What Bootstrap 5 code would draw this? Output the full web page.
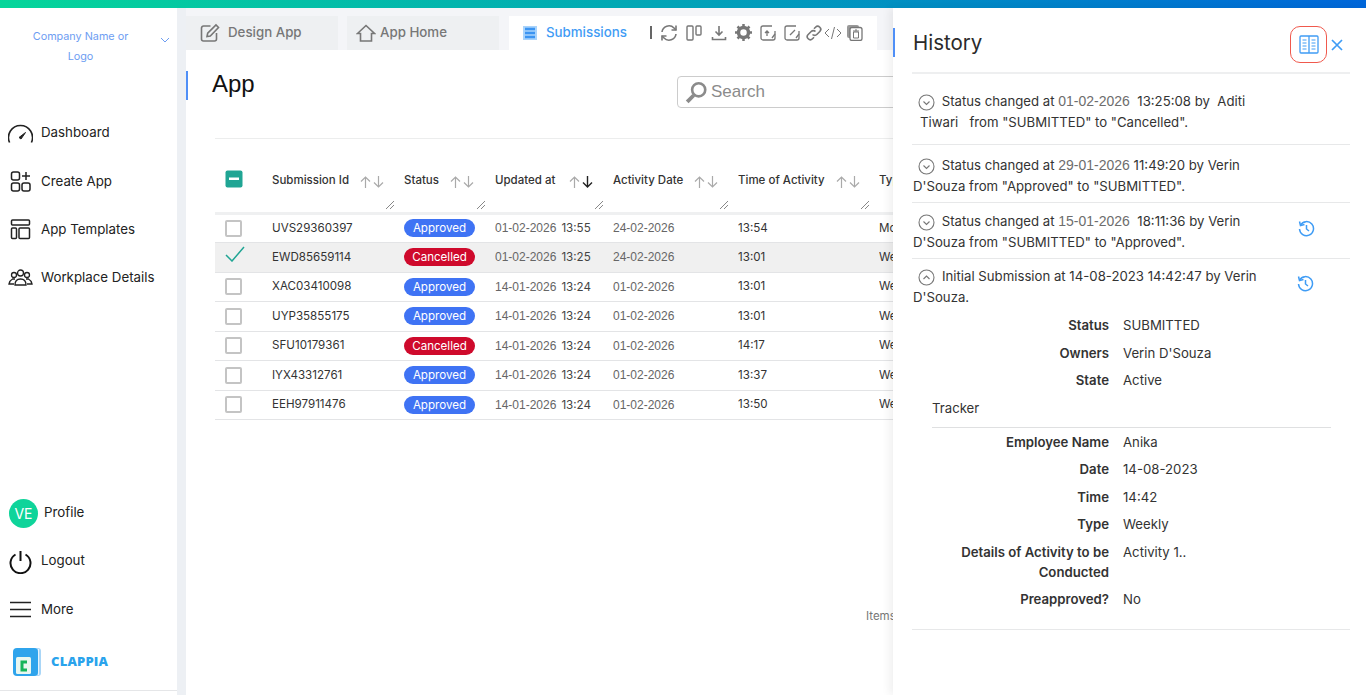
<!DOCTYPE html>
<html lang="en">
<head>
<meta charset="utf-8">
<title>App</title>
<link href="https://cdn.jsdelivr.net/npm/bootstrap@5.3.0/dist/css/bootstrap.min.css" rel="stylesheet">
<style>
html,body{height:695px;overflow:hidden}
body{font-family:Inter,"Liberation Sans",sans-serif;font-size:13px;color:#222;background:#fff}
.topgrad{height:8px;background:linear-gradient(90deg,#05d69a 0%,#01a9b4 45%,#0066d9 100%)}
.shell{height:687px}
.sidebar{width:177px;flex:none;background:#fff;padding-bottom:4px}
.brandbox{height:101px;padding-top:19px;position:relative;color:#6d9df2;font-size:10.8px;line-height:20px;text-align:center;width:161px;flex:none}
.brandchev{position:absolute;left:160px;top:29px}
.navlink{display:flex;align-items:center;height:48.4px;padding-left:8px;gap:8px;color:#222;font-size:13.3px;text-decoration:none;white-space:nowrap}
.navico{width:25px;height:25px;flex:none}
.avatarve{width:29px;height:29px;flex:none;border-radius:50%;background:#0fd49a;color:#fff;font-size:14px;margin-left:1px;margin-right:-2px}
.logoword{color:#2aa3ec;font-family:"Open Sans",sans-serif;font-weight:800;font-size:13px;letter-spacing:.2px}
.logorow{margin-top:9px;padding-left:12px;gap:9px;height:38px;display:flex;align-items:center}
.baseline{height:1px;background:#e5e6e8;margin-top:9px}
.gutter{width:9px;flex:none;background:#edf0f4}
.mainpane{flex:1 1 0;min-width:0;overflow:hidden;background:#fff}
.tabstrip{height:42px;background:#f4f5f8;padding-top:8px;gap:9px}
.tabgray{width:152px;height:34px;background:#eef0f2;color:#777;font-size:13.3px;font-weight:500;gap:8px;padding-bottom:1px}
.tabfirst{padding-left:14px}
.tabsecond{padding-left:9px;gap:4px;margin-right:1px}
.tabactive{width:368px;height:34px;background:#fff;padding-left:14px;padding-bottom:1px;flex:none}
.subname{color:#3f9cf5;font-size:13.3px;font-weight:500;margin-left:9px;margin-right:22px;width:82px;white-space:nowrap}
.tooldiv{width:2px;height:13px;background:#666;margin-right:8px}
.toolset{color:#777}
.gapa{margin-left:8px}.gapb{margin-left:9px}.gapc{margin-left:6px}.gapd{margin-left:2px}.gape{margin-left:4px}
.titlerow{height:89px;border-bottom:1px solid #eceded;margin-left:29px;position:relative;padding-top:20px}
.bluemark{position:absolute;left:-29px;top:21px;width:2px;height:29px;background:#4f8ff7}
.apptitle{font-family:"Liberation Sans",sans-serif;font-size:24px;color:#111;margin:0 0 0 -3px;font-weight:400;line-height:28px}
.searchbox{position:absolute;left:462px;top:26px;width:260px;height:32px;border:1px solid #ccc;border-radius:4px;color:#8b8b8b;font-family:"Liberation Sans",sans-serif;font-size:17px;padding-left:7px;gap:3px}
.tablewrap{margin:18px 0 0 29px;width:750px;overflow:hidden}
.gridtable{table-layout:fixed;width:750px;border-collapse:collapse;margin:0}
.colc0{width:57px}.colc1{width:132px}.colc2{width:91px}.colc3{width:118px}.colc4{width:125px}.colc5{width:141px}.colc6{width:86px}
.gridtable th{height:56px;border-bottom:3px solid #eff0f1;font-weight:500;font-size:11.5px;color:#333;vertical-align:top;padding:15px 0 0;position:relative;white-space:nowrap}
.gridtable td{height:29.5px;border-bottom:1px solid #e3e4e6;font-size:11.6px;color:#333;padding:0;vertical-align:middle;white-space:nowrap;overflow:hidden}
.rowsel td{background:#f0f0f0}
.datecell{color:#666;font-family:"Liberation Sans",sans-serif;font-size:12px}
.gridtable td.datecell{color:#666;font-family:"Liberation Sans",sans-serif;font-size:12px}
.timecell{color:#444;margin-left:5px}
.sorters{display:inline-flex;margin-left:11px;gap:2px;vertical-align:-4px}
.sorterswide{margin-left:14px}
.gripmark{position:absolute;right:10px;bottom:3px}
.statuspill{display:inline-block;width:71px;height:18px;line-height:18px;border-radius:9px;text-align:center;font-size:11.6px;color:#fff;background:#3f73f4}
.pillred{background:#cf0a2c}
.boxmark{display:block;width:17px;height:17px;border:2px solid #c4c4c4;border-radius:2px;margin-left:10px}
.headbox{display:block;margin:-2px 0 0 10px}
.rowcheck{display:block;margin:-6px 0 0 10px}
.footitems{position:absolute;left:866px;top:600px;color:#777;font-size:11.5px}
.historypane{width:473px;flex:none;background:#fff;box-shadow:-4px 0 8px rgba(0,0,0,.06);position:relative;z-index:3;padding:0 16px 0 20px;font-size:13.2px;color:#333}
.panebar{position:absolute;left:0;top:20px;width:2px;height:29px;background:#4f8ff7}
.panehead{height:66px;border-bottom:2px solid #eeeff0;padding:22px 0 0 1px;position:relative;margin-left:-1px}
.panetitle{font-size:20.5px;font-weight:400;color:#2b2b2b;margin:0;line-height:26px}
.readbtn{position:absolute;left:378px;top:18px;width:37px;height:37px;border:1px solid #f0594d;border-radius:10px}
.closemark{position:absolute;left:419px;top:31px}
.histitem{border-bottom:1px solid #e7e8e9;position:relative;line-height:21px;white-space:nowrap;margin-left:-1px;padding-left:1px}
.histfirst{height:71px;padding-top:17px}
.histsecond{height:58px;padding-top:10px}
.histthird{height:56px;padding-top:8px}
.histfourth{padding-top:7px;height:371px}
.circlechev{display:inline-block;vertical-align:-5px;margin:0 3px 0 5px}
.circlechevup{margin-right:7px}
.tiwarimark{margin-left:7px}
.restoremark{position:absolute;left:386px;top:17px}
.restorelow{left:385px;top:16px}
.mutedate{color:#6d6d6d;font-family:"Liberation Sans",sans-serif;font-size:14px}
.detailrow{display:flex;gap:14px;line-height:20px;margin-bottom:7.5px}
.detailkey{width:196px;text-align:right;font-weight:600;flex:none;color:#333;padding-left:45px;white-space:normal}
.trackerhead{margin-left:19px;border-bottom:1px solid #dfe0e1;width:399px;height:30px;line-height:20px;margin-bottom:4px}
.detailstack{padding-top:7px}
</style>
</head>
<body>
<div class="topgrad"></div>
<div class="d-flex shell position-relative">
  <aside class="sidebar d-flex flex-column">
    <div class="brandbox">Company Name or<br>Logo
      <svg class="brandchev" width="10" height="6" viewBox="0 0 10 6" fill="none" stroke="#6d9df2"><path d="M1 1l4 4 4-4"/></svg>
    </div>
    <a class="navlink" href="#"><svg class="navico" viewBox="0 0 25 25" fill="none" stroke="#222" stroke-width="1.600"><path d="M1.600 21.500A12 12 0 1 1 23.400 21.500"/><path d="M11 16.500L17.500 11.500 13 18z" fill="#222" stroke-width="1"/></svg>Dashboard</a>
    <a class="navlink" href="#"><svg class="navico" viewBox="0 0 25 25" fill="none" stroke="#222" stroke-width="1.500"><rect x="3.500" y="3" width="8" height="8" rx="2"/><rect x="3.500" y="14" width="8" height="8" rx="2"/><rect x="14" y="14" width="8" height="8" rx="2"/><path d="M18 3v8M14 7h8"/></svg>Create App</a>
    <a class="navlink" href="#"><svg class="navico" viewBox="0 0 25 25" fill="none" stroke="#222" stroke-width="1.500"><rect x="3.500" y="3" width="18" height="5" rx="1"/><rect x="3.500" y="11" width="5" height="10.500" rx="1"/><rect x="11" y="11" width="10.500" height="10.500" rx="1"/></svg>App Templates</a>
    <a class="navlink" href="#"><svg class="navico" viewBox="0 0 25 25" fill="none" stroke="#222" stroke-width="1.300"><circle cx="12.500" cy="7" r="3"/><circle cx="6" cy="9" r="2.500"/><circle cx="19" cy="9" r="2.500"/><path d="M7 19c0-4 2-6 5.500-6s5.500 2 5.500 6z"/><path d="M7 13H4.500C2.500 14 1.500 15.500 1 18h5"/><path d="M18 13h2.500c2 1 3 2.500 3.500 5h-5"/></svg>Workplace Details</a>
    <div class="flex-grow-1"></div>
    <a class="navlink" href="#"><span class="avatarve d-flex align-items-center justify-content-center">VE</span><span>Profile</span></a>
    <a class="navlink" href="#"><svg class="navico" viewBox="0 0 25 25" fill="none" stroke="#111" stroke-width="2"><path d="M7.500 5.500a10 10 0 1 0 10 0"/><path d="M12.500 2v10"/></svg>Logout</a>
    <a class="navlink" href="#"><svg class="navico" viewBox="0 0 25 25" fill="none" stroke="#222" stroke-width="1.500"><path d="M2 5.500h21M2 12.500h21M2 19.500h21"/></svg>More</a>
    <div class="logorow"><svg width="30" height="30" viewBox="0 0 30 30"><rect x="18" y="1" width="11" height="28" rx="3" fill="#a9d6f7"/><path d="M26.500 2v26" stroke="#e6f4fd"/><rect x="1" y="1" width="25" height="28" rx="4" fill="#2fa4ec"/><rect x="4" y="10" width="15" height="17" rx="1.500" fill="#eaf7f0"/><path d="M15 15h-5v8h5" fill="none" stroke="#16b55b" stroke-width="3"/></svg><span class="logoword">CLAPPIA</span></div>
    <div class="baseline"></div>
  </aside>
  <div class="gutter"></div>
  <main class="mainpane">
    <div class="tabstrip d-flex">
      <div class="tabgray tabfirst d-flex align-items-center"><svg width="20" height="20" viewBox="0 0 20 20" fill="none" stroke="#777" stroke-width="1.600"><path d="M16.500 10v6a2 2 0 0 1-2 2h-11a2 2 0 0 1-2-2V5a2 2 0 0 1 2-2h7"/><path d="M7 13.500l.7-3.300L16 2l2.500 2.500L10.300 13z"/></svg>Design App</div>
      <div class="tabgray tabsecond d-flex align-items-center"><svg width="20" height="20" viewBox="0 0 20 20" fill="none" stroke="#777" stroke-width="1.600"><path d="M1.500 10.500L10 2.500l8.500 8h-3V18h-11v-7.500z"/></svg>App Home</div>
      <div class="tabactive d-flex align-items-center">
        <svg width="14" height="14" viewBox="0 0 14 14"><rect width="14" height="14" fill="#a9d3fb"/><path d="M2 3h10M2 7h10M2 11h10" stroke="#3b94f2" stroke-width="2.400"/></svg>
        <span class="subname">Submissions</span>
        <span class="tooldiv"></span>
        <div class="d-flex align-items-center toolset">
          <svg width="18" height="18" viewBox="0 0 18 18" fill="none" stroke="#777" stroke-width="1.600"><path d="M2 8a7 7 0 0 1 12-4l2 2M16 10a7 7 0 0 1-12 4l-2-2"/><path d="M16 1.500V6h-4.500M2 16.500V12h4.500"/></svg>
          <svg class="gapa" width="16" height="16" viewBox="0 0 16 16" fill="none" stroke="#777" stroke-width="1.400"><rect x="1" y="1" width="6" height="14" rx="1"/><rect x="10" y="1" width="5" height="9" rx="1"/></svg>
          <svg class="gapb" width="16" height="16" viewBox="0 0 16 16" fill="none" stroke="#777" stroke-width="1.600"><path d="M8 1v9M4.500 6.500L8 10l3.500-3.500M1.500 12v2.500h13V12"/></svg>
          <svg class="gapa" width="17" height="17" viewBox="0 0 17 17"><circle cx="8.500" cy="8.500" r="5" fill="none" stroke="#777" stroke-width="3.500"/><path d="M8.500 0v3M8.500 14v3M0 8.500h3M14 8.500h3M2.500 2.500l2 2M12.500 12.500l2 2M14.500 2.500l-2 2M4.500 12.500l-2 2" stroke="#777" stroke-width="2.500"/></svg>
          <svg class="gapa" width="16" height="16" viewBox="0 0 16 16" fill="none" stroke="#777" stroke-width="1.300"><path d="M15 6v7a2 2 0 0 1-2 2H3a2 2 0 0 1-2-2V3a2 2 0 0 1 2-2h9"/><path d="M7 11V6M5 8l2-2 2 2M12 13l3-4"/></svg>
          <svg class="gapa" width="16" height="16" viewBox="0 0 16 16" fill="none" stroke="#777" stroke-width="1.300"><path d="M15 6v7a2 2 0 0 1-2 2H3a2 2 0 0 1-2-2V3a2 2 0 0 1 2-2h9"/><path d="M6 10l5-5M12 13l3-4"/></svg>
          <svg class="gapc" width="16" height="16" viewBox="0 0 16 16" fill="none" stroke="#777" stroke-width="1.600"><path d="M6.500 9.500a3 3 0 0 0 4.300 0l3-3a3 3 0 0 0-4.300-4.300L8 3.700"/><path d="M9.500 6.500a3 3 0 0 0-4.300 0l-3 3a3 3 0 0 0 4.300 4.300L8 12.300"/></svg>
          <svg class="gapd" width="18" height="16" viewBox="0 0 18 16" fill="none" stroke="#777" stroke-width="1"><path d="M5 4L1 8l4 4M13 4l4 4-4 4M10.500 2l-3 12"/></svg>
          <svg class="gape" width="17" height="17" viewBox="0 0 17 17" fill="none"><rect x="1" y="1" width="12" height="13" rx="2" fill="#999"/><rect x="4" y="3.500" width="12" height="13" rx="2" fill="#fff" stroke="#777" stroke-width="1.300"/><path d="M7.500 8h5v6h-5zM7 7h6M9 6h2" stroke="#777" stroke-width="1"/></svg>
        </div>
      </div>
    </div>
    <div class="titlerow">
      <span class="bluemark"></span>
      <h1 class="apptitle">App</h1>
      <div class="searchbox d-flex align-items-center"><svg width="23" height="23" viewBox="0 0 21 21" fill="none" stroke="#8b8b8b" stroke-width="2.400"><circle cx="12.500" cy="8" r="6"/><path d="M8 13l-6 6" stroke-width="3.500"/></svg>Search</div>
    </div>
    <div class="tablewrap">
      <table class="gridtable">
        <colgroup><col class="colc0"><col class="colc1"><col class="colc2"><col class="colc3"><col class="colc4"><col class="colc5"><col class="colc6"></colgroup>
        <thead><tr>
          <th><svg class="headbox" width="19" height="19" viewBox="0 0 19 19"><rect x=".5" y=".5" width="17" height="17" rx="2" fill="#20a594"/><rect x="4" y="7.500" width="10" height="2.500" fill="#fff"/></svg></th>
          <th>Submission Id<span class="sorters"><svg width="11" height="12" viewBox="0 0 11 12" fill="none" stroke="#aaa" stroke-width="1.200"><path d="M5.500 12V1M1 5.500L5.500 1 10 5.500"/></svg><svg width="11" height="12" viewBox="0 0 11 12" fill="none" stroke="#aaa" stroke-width="1.200"><path d="M5.500 0v11M1 6.500L5.500 11 10 6.500"/></svg></span><svg class="gripmark" width="9" height="8" viewBox="0 0 9 8" stroke="#888" fill="none"><path d="M1 8l8-8M5 8l4-4"/></svg></th>
          <th>Status<span class="sorters"><svg width="11" height="12" viewBox="0 0 11 12" fill="none" stroke="#aaa" stroke-width="1.200"><path d="M5.500 12V1M1 5.500L5.500 1 10 5.500"/></svg><svg width="11" height="12" viewBox="0 0 11 12" fill="none" stroke="#aaa" stroke-width="1.200"><path d="M5.500 0v11M1 6.500L5.500 11 10 6.500"/></svg></span><svg class="gripmark" width="9" height="8" viewBox="0 0 9 8" stroke="#888" fill="none"><path d="M1 8l8-8M5 8l4-4"/></svg></th>
          <th>Updated at<span class="sorters sorterswide"><svg width="11" height="12" viewBox="0 0 11 12" fill="none" stroke="#aaa" stroke-width="1.200"><path d="M5.500 12V1M1 5.500L5.500 1 10 5.500"/></svg><svg width="11" height="12" viewBox="0 0 11 12" fill="none" stroke="#222" stroke-width="1.400"><path d="M5.500 0v11M1 6.500L5.500 11 10 6.500"/></svg></span><svg class="gripmark" width="9" height="8" viewBox="0 0 9 8" stroke="#888" fill="none"><path d="M1 8l8-8M5 8l4-4"/></svg></th>
          <th>Activity Date<span class="sorters"><svg width="11" height="12" viewBox="0 0 11 12" fill="none" stroke="#aaa" stroke-width="1.200"><path d="M5.500 12V1M1 5.500L5.500 1 10 5.500"/></svg><svg width="11" height="12" viewBox="0 0 11 12" fill="none" stroke="#aaa" stroke-width="1.200"><path d="M5.500 0v11M1 6.500L5.500 11 10 6.500"/></svg></span><svg class="gripmark" width="9" height="8" viewBox="0 0 9 8" stroke="#888" fill="none"><path d="M1 8l8-8M5 8l4-4"/></svg></th>
          <th>Time of Activity<span class="sorters"><svg width="11" height="12" viewBox="0 0 11 12" fill="none" stroke="#aaa" stroke-width="1.200"><path d="M5.500 12V1M1 5.500L5.500 1 10 5.500"/></svg><svg width="11" height="12" viewBox="0 0 11 12" fill="none" stroke="#aaa" stroke-width="1.200"><path d="M5.500 0v11M1 6.500L5.500 11 10 6.500"/></svg></span><svg class="gripmark" width="9" height="8" viewBox="0 0 9 8" stroke="#888" fill="none"><path d="M1 8l8-8M5 8l4-4"/></svg></th>
          <th>Type</th>
        </tr></thead>
        <tbody>
          <tr><td><span class="boxmark"></span></td><td>UVS29360397</td><td><span class="statuspill">Approved</span></td><td><span class="datecell">01-02-2026</span><span class="timecell">13:55</span></td><td class="datecell">24-02-2026</td><td>13:54</td><td>Monthly</td></tr>
          <tr class="rowsel"><td><svg class="rowcheck" width="20" height="16" viewBox="0 0 20 16" fill="none" stroke="#20a594" stroke-width="1.500"><path d="M1 9l6 6L19 1"/></svg></td><td>EWD85659114</td><td><span class="statuspill pillred">Cancelled</span></td><td><span class="datecell">01-02-2026</span><span class="timecell">13:25</span></td><td class="datecell">24-02-2026</td><td>13:01</td><td>Weekly</td></tr>
          <tr><td><span class="boxmark"></span></td><td>XAC03410098</td><td><span class="statuspill">Approved</span></td><td><span class="datecell">14-01-2026</span><span class="timecell">13:24</span></td><td class="datecell">01-02-2026</td><td>13:01</td><td>Weekly</td></tr>
          <tr><td><span class="boxmark"></span></td><td>UYP35855175</td><td><span class="statuspill">Approved</span></td><td><span class="datecell">14-01-2026</span><span class="timecell">13:24</span></td><td class="datecell">01-02-2026</td><td>13:01</td><td>Weekly</td></tr>
          <tr><td><span class="boxmark"></span></td><td>SFU10179361</td><td><span class="statuspill pillred">Cancelled</span></td><td><span class="datecell">14-01-2026</span><span class="timecell">13:24</span></td><td class="datecell">01-02-2026</td><td>14:17</td><td>Weekly</td></tr>
          <tr><td><span class="boxmark"></span></td><td>IYX43312761</td><td><span class="statuspill">Approved</span></td><td><span class="datecell">14-01-2026</span><span class="timecell">13:24</span></td><td class="datecell">01-02-2026</td><td>13:37</td><td>Weekly</td></tr>
          <tr><td><span class="boxmark"></span></td><td>EEH97911476</td><td><span class="statuspill">Approved</span></td><td><span class="datecell">14-01-2026</span><span class="timecell">13:24</span></td><td class="datecell">01-02-2026</td><td>13:50</td><td>Weekly</td></tr>
        </tbody>
      </table>
    </div>
    <div class="footitems">Items</div>
  </main>
  <section class="historypane">
    <span class="panebar"></span>
    <div class="panehead">
      <h2 class="panetitle">History</h2>
      <div class="readbtn d-flex align-items-center justify-content-center"><svg width="20" height="19" viewBox="0 0 20 19" fill="none" stroke="#3f9cf5" stroke-width="1.300"><rect x="1" y="1" width="18" height="17" rx="1"/><path d="M10 1v17"/><path d="M3.500 5h4M3.500 8h4M3.500 11h4M3.500 14h4M12.500 5h4M12.500 8h4M12.500 11h4M12.500 14h4" stroke-width="1"/></svg></div>
      <svg class="closemark" width="12" height="12" viewBox="0 0 12 12" stroke="#3f9cf5" stroke-width="1.700"><path d="M1 1l10 10M11 1L1 11"/></svg>
    </div>
    <div class="histitem histfirst"><svg class="circlechev" width="17" height="17" viewBox="0 0 17 17" fill="none" stroke="#777" stroke-width="1.100"><circle cx="8.500" cy="8.500" r="7.500"/><path d="M5.500 7.500l3 3 3-3"/></svg> Status changed at <span class="mutedate">01-02-2026</span>&nbsp; 13:25:08 by&nbsp; Aditi<br><span class="tiwarimark">Tiwari</span>&nbsp;&nbsp; from "SUBMITTED" to "Cancelled".</div>
    <div class="histitem histsecond"><svg class="circlechev" width="17" height="17" viewBox="0 0 17 17" fill="none" stroke="#777" stroke-width="1.100"><circle cx="8.500" cy="8.500" r="7.500"/><path d="M5.500 7.500l3 3 3-3"/></svg> Status changed at <span class="mutedate">29-01-2026</span> 11:49:20 by Verin<br>D'Souza from "Approved" to "SUBMITTED".</div>
    <div class="histitem histthird"><svg class="circlechev" width="17" height="17" viewBox="0 0 17 17" fill="none" stroke="#777" stroke-width="1.100"><circle cx="8.500" cy="8.500" r="7.500"/><path d="M5.500 7.500l3 3 3-3"/></svg> Status changed at <span class="mutedate">15-01-2026</span>&nbsp; 18:11:36 by Verin<br>D'Souza from "SUBMITTED" to "Approved".
      <svg class="restoremark" width="17" height="17" viewBox="0 0 17 17" fill="none" stroke="#3f9cf5" stroke-width="1.500"><path d="M2.500 5a7 7 0 1 1-1 4"/><path d="M1.500 1.500l1 4 4-1M8.500 5v4l2.500 2"/></svg></div>
    <div class="histitem histfourth"><svg class="circlechev circlechevup" width="17" height="17" viewBox="0 0 17 17" fill="none" stroke="#777" stroke-width="1.100"><circle cx="8.500" cy="8.500" r="7.500"/><path d="M5.500 10l3-3 3 3"/></svg>Initial Submission at 14-08-2023 14:42:47 by Verin<br>D'Souza.
      <svg class="restoremark restorelow" width="17" height="17" viewBox="0 0 17 17" fill="none" stroke="#3f9cf5" stroke-width="1.500"><path d="M2.500 5a7 7 0 1 1-1 4"/><path d="M1.500 1.500l1 4 4-1M8.500 5v4l2.500 2"/></svg>
      <div class="detailstack">
        <div class="detailrow"><span class="detailkey">Status</span><span>SUBMITTED</span></div>
        <div class="detailrow"><span class="detailkey">Owners</span><span>Verin D'Souza</span></div>
        <div class="detailrow"><span class="detailkey">State</span><span>Active</span></div>
        <div class="trackerhead">Tracker</div>
        <div class="detailrow"><span class="detailkey">Employee Name</span><span>Anika</span></div>
        <div class="detailrow"><span class="detailkey">Date</span><span>14-08-2023</span></div>
        <div class="detailrow"><span class="detailkey">Time</span><span>14:42</span></div>
        <div class="detailrow"><span class="detailkey">Type</span><span>Weekly</span></div>
        <div class="detailrow"><span class="detailkey">Details of Activity to be Conducted</span><span>Activity 1..</span></div>
        <div class="detailrow"><span class="detailkey">Preapproved?</span><span>No</span></div>
      </div>
    </div>
  </section>
</div>
<script src="https://cdn.jsdelivr.net/npm/bootstrap@5.3.0/dist/js/bootstrap.bundle.min.js"></script>
</body>
</html>
